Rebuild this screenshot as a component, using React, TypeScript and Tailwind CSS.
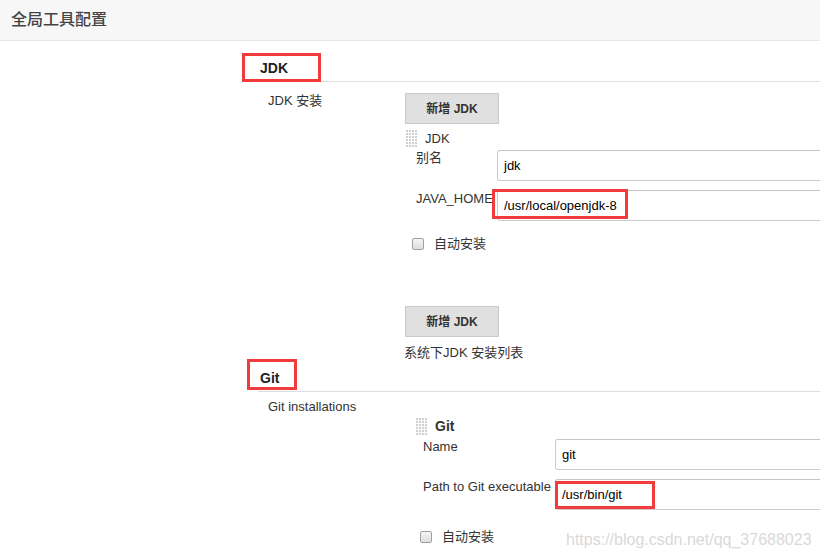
import React from "react";

const font = "font-['Liberation_Sans','Noto_Sans_CJK_SC',sans-serif]";

function Handle() {
  const dots: React.ReactNode[] = [];
  for (let r = 0; r < 6; r++) {
    for (let c = 0; c < 4; c++) {
      dots.push(<rect key={`${r}-${c}`} x={c * 3} y={r * 3} width={2} height={2} fill="#cfcfcf" />);
    }
  }
  return (
    <svg width="11" height="17" viewBox="0 0 11 17" className="shrink-0">
      {dots}
    </svg>
  );
}

function Checkbox() {
  return (
    <span className="block w-[12px] h-[12px] shrink-0 rounded-[2px] border border-[#a0a0a0] bg-gradient-to-b from-[#f4f4f4] to-[#dedede]" />
  );
}

function RedBox({ className }: { className: string }) {
  return <div className={`absolute border-[3px] border-[#f43b3b] pointer-events-none ${className}`} />;
}

function TextInput({ value, children }: { value: string; children?: React.ReactNode }) {
  return (
    <div className="relative w-[360px] h-[31px] shrink-0 rounded-[3px] border border-[#cccccc] border-t-[#c4c4c4] bg-white flex items-center pl-[6px] text-[13px] text-black">
      {value}
      {children}
    </div>
  );
}

function AddButton({ label }: { label: string }) {
  return (
    <button className="w-[94px] h-[31px] bg-[#e0e0e0] border border-[#c9c9c9] text-[12px] font-bold text-[#333]">
      {label}
    </button>
  );
}

export default function App() {
  return (
    <div className={`relative w-[820px] h-[558px] overflow-hidden bg-white text-[#333] ${font}`}>
      <header className="h-[41px] bg-[#f7f7f7] border-b border-[#e6e6e6] flex items-center pl-[11px] text-[16px] font-medium text-[#444]">
        全局工具配置
      </header>

      <div className="flex">
        <aside className="w-[258px] shrink-0" />

        <main className="flex-1 min-w-0">
          {/* JDK */}
          <section>
            <div className="relative h-[41px] border-b border-[#dddddd] pt-[19px] pl-[2px] text-[14px] leading-[16px] font-bold text-[#222]">
              JDK
              <RedBox className="left-[-16px] top-[12px] w-[79px] h-[29px]" />
            </div>

            <div className="flex items-start mt-[11px]">
              <div className="w-[147px] shrink-0 pl-[10px] text-[13px] leading-[16px]">JDK 安装</div>
              <div className="flex flex-col">
                <AddButton label="新增 JDK" />

                <div className="flex items-center h-[17px] mt-[6px] ml-[1px] gap-[8px] text-[13px]">
                  <Handle />
                  <span>JDK</span>
                </div>

                <div className="flex items-start mt-[3px]">
                  <div className="w-[92px] shrink-0 pl-[11px] pt-[0px] text-[13px] leading-[16px] whitespace-nowrap">别名</div>
                  <TextInput value="jdk" />
                </div>

                <div className="flex items-start mt-[9px]">
                  <div className="w-[92px] shrink-0 pl-[11px] pt-[1px] text-[13px] leading-[16px] whitespace-nowrap">JAVA_HOME</div>
                  <TextInput value="/usr/local/openjdk-8">
                    <RedBox className="left-[-6px] top-[-2px] w-[136px] h-[30px]" />
                  </TextInput>
                </div>

                <div className="flex items-center mt-[15px] ml-[7px] gap-[10px] h-[16px] text-[13px]">
                  <Checkbox />
                  <span>自动安装</span>
                </div>

                <div className="mt-[54px]">
                  <AddButton label="新增 JDK" />
                </div>
                <div className="mt-[8px] ml-[-1px] text-[13px] leading-[16px] whitespace-nowrap">系统下JDK 安装列表</div>
              </div>
            </div>
          </section>

          {/* Git */}
          <section>
            <div className="relative h-[31px] border-b border-[#dddddd] pt-[9px] pl-[2px] text-[14px] leading-[16px] font-bold text-[#222]">
              Git
              <RedBox className="left-[-11px] top-[-2px] w-[50px] h-[31px]" />
            </div>

            <div className="flex items-start mt-[7px]">
              <div className="w-[158px] shrink-0 pl-[10px] text-[13px] leading-[16px] whitespace-nowrap">Git installations</div>
              <div className="flex flex-col pt-[19px]">
                <div className="flex items-center h-[17px] gap-[8px] text-[14px] font-semibold">
                  <Handle />
                  <span>Git</span>
                </div>

                <div className="flex items-start mt-[4px]">
                  <div className="w-[139px] shrink-0 pl-[7px] text-[13px] leading-[16px] whitespace-nowrap">Name</div>
                  <TextInput value="git" />
                </div>

                <div className="flex items-start mt-[9px]">
                  <div className="w-[139px] shrink-0 pl-[7px] text-[13px] leading-[16px] whitespace-nowrap">Path to Git executable</div>
                  <TextInput value="/usr/bin/git">
                    <RedBox className="left-[-1px] top-[1px] w-[100px] h-[28px]" />
                  </TextInput>
                </div>

                <div className="flex items-center mt-[19px] ml-[4px] gap-[10px] h-[16px] text-[13px]">
                  <Checkbox />
                  <span>自动安装</span>
                </div>
              </div>
            </div>
          </section>
        </main>
      </div>

      <div className="absolute left-[566px] top-[530px] text-[16px] leading-[20px] text-[#d9d9d9] whitespace-nowrap">
        https://blog.csdn.net/qq_37688023
      </div>
    </div>
  );
}
